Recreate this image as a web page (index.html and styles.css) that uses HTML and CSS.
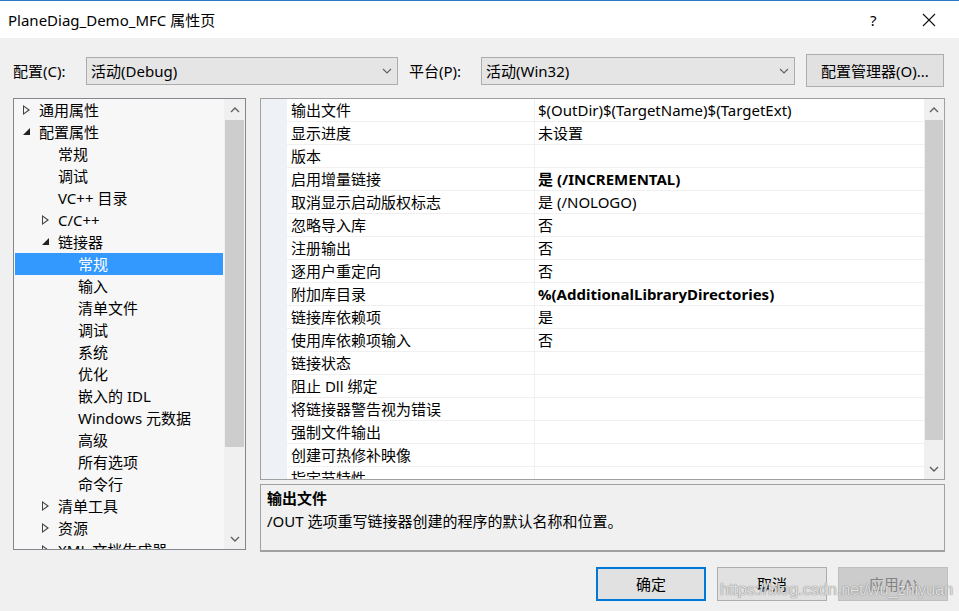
FILE: index.html
```html
<!DOCTYPE html>
<html lang="zh-CN">
<head>
  <meta charset="UTF-8">
  <title>PlaneDiag_Demo_MFC 属性页</title>
  <link rel="stylesheet" href="styles.css">
</head>
<body>
<div class="window">
  <div class="titlebar">
    <span class="title">PlaneDiag_Demo_MFC 属性页</span>
    <span class="help">?</span>
    <span class="close">
      <svg width="14" height="14" viewBox="0 0 14 14"><path d="M1 1L13 13M13 1L1 13" stroke="#111" stroke-width="1.1" fill="none"/></svg>
    </span>
  </div>

  <div class="content">
    <div class="config-row">
      <span class="label lbl-cfg">配置(C):</span>
      <div class="select sel-cfg">
        <span>活动(Debug)</span>
        <svg class="chev" width="10" height="6" viewBox="0 0 10 6"><path d="M1 1L5 5L9 1" stroke="#606060" stroke-width="1.1" fill="none"/></svg>
      </div>
      <span class="label lbl-plat">平台(P):</span>
      <div class="select sel-plat">
        <span>活动(Win32)</span>
        <svg class="chev" width="10" height="6" viewBox="0 0 10 6"><path d="M1 1L5 5L9 1" stroke="#606060" stroke-width="1.1" fill="none"/></svg>
      </div>
      <div class="btn btn-mgr">配置管理器(O)...</div>
    </div>

    <div class="main">
      <div class="tree">
        <div class="tree-list">
          <div class="node lv0"><span class="tw closed"></span>通用属性</div>
          <div class="node lv0"><span class="tw open"></span>配置属性</div>
          <div class="node lv1">常规</div>
          <div class="node lv1">调试</div>
          <div class="node lv1">VC++ 目录</div>
          <div class="node lv1"><span class="tw closed"></span>C/C++</div>
          <div class="node lv1"><span class="tw open"></span>链接器</div>
          <div class="node lv2 selected">常规</div>
          <div class="node lv2">输入</div>
          <div class="node lv2">清单文件</div>
          <div class="node lv2">调试</div>
          <div class="node lv2">系统</div>
          <div class="node lv2">优化</div>
          <div class="node lv2">嵌入的 IDL</div>
          <div class="node lv2">Windows 元数据</div>
          <div class="node lv2">高级</div>
          <div class="node lv2">所有选项</div>
          <div class="node lv2">命令行</div>
          <div class="node lv1"><span class="tw closed"></span>清单工具</div>
          <div class="node lv1"><span class="tw closed"></span>资源</div>
          <div class="node lv1"><span class="tw closed"></span>XML 文档生成器</div>
        </div>
        <div class="vscroll tree-scroll">
          <div class="arrow">
            <svg width="10" height="6" viewBox="0 0 10 6"><path d="M1 5L5 1L9 5" stroke="#606060" stroke-width="1.4" fill="none"/></svg>
          </div>
          <div class="thumb"></div>
          <div class="track"></div>
          <div class="arrow">
            <svg width="10" height="6" viewBox="0 0 10 6"><path d="M1 1L5 5L9 1" stroke="#606060" stroke-width="1.4" fill="none"/></svg>
          </div>
        </div>
      </div>

      <div class="right">
        <div class="props">
          <div class="prop-table">
            <div class="row"><span class="gutter"></span><span class="name">输出文件</span><span class="val">$(OutDir)$(TargetName)$(TargetExt)</span></div>
            <div class="row"><span class="gutter"></span><span class="name">显示进度</span><span class="val">未设置</span></div>
            <div class="row"><span class="gutter"></span><span class="name">版本</span><span class="val"></span></div>
            <div class="row"><span class="gutter"></span><span class="name">启用增量链接</span><span class="val bold">是 (/INCREMENTAL)</span></div>
            <div class="row"><span class="gutter"></span><span class="name">取消显示启动版权标志</span><span class="val">是 (/NOLOGO)</span></div>
            <div class="row"><span class="gutter"></span><span class="name">忽略导入库</span><span class="val">否</span></div>
            <div class="row"><span class="gutter"></span><span class="name">注册输出</span><span class="val">否</span></div>
            <div class="row"><span class="gutter"></span><span class="name">逐用户重定向</span><span class="val">否</span></div>
            <div class="row"><span class="gutter"></span><span class="name">附加库目录</span><span class="val bold">%(AdditionalLibraryDirectories)</span></div>
            <div class="row"><span class="gutter"></span><span class="name">链接库依赖项</span><span class="val">是</span></div>
            <div class="row"><span class="gutter"></span><span class="name">使用库依赖项输入</span><span class="val">否</span></div>
            <div class="row"><span class="gutter"></span><span class="name">链接状态</span><span class="val"></span></div>
            <div class="row"><span class="gutter"></span><span class="name">阻止 Dll 绑定</span><span class="val"></span></div>
            <div class="row"><span class="gutter"></span><span class="name">将链接器警告视为错误</span><span class="val"></span></div>
            <div class="row"><span class="gutter"></span><span class="name">强制文件输出</span><span class="val"></span></div>
            <div class="row"><span class="gutter"></span><span class="name">创建可热修补映像</span><span class="val"></span></div>
            <div class="row"><span class="gutter"></span><span class="name">指定节特性</span><span class="val"></span></div>
          </div>
          <div class="vscroll prop-scroll">
            <div class="arrow">
              <svg width="10" height="6" viewBox="0 0 10 6"><path d="M1 5L5 1L9 5" stroke="#606060" stroke-width="1.4" fill="none"/></svg>
            </div>
            <div class="thumb"></div>
            <div class="track"></div>
            <div class="arrow">
              <svg width="10" height="6" viewBox="0 0 10 6"><path d="M1 1L5 5L9 1" stroke="#606060" stroke-width="1.4" fill="none"/></svg>
            </div>
          </div>
        </div>
        <div class="desc">
          <div class="desc-title">输出文件</div>
          <div class="desc-text">/OUT 选项重写链接器创建的程序的默认名称和位置。</div>
        </div>
      </div>
    </div>

    <div class="buttons">
      <div class="btn btn-ok">确定</div>
      <div class="btn">取消</div>
      <div class="btn disabled">应用(A)</div>
    </div>
  </div>

  <div class="watermark">https://blog.csdn.net/wu_zhiyuan</div>
</div>
</body>
</html>
```

FILE: styles.css
```css
* {
  box-sizing: border-box;
}

body {
  margin: 0;
  font-family: "Noto Sans", "Noto Sans CJK SC", sans-serif;
  font-size: 15px;
  color: #000;
  background: #f0f0f0;
}

.window {
  position: relative;
  width: 959px;
  height: 611px;
  overflow: hidden;
  background: #f0f0f0;
}

.titlebar {
  height: 38px;
  display: flex;
  align-items: center;
  background: #fff;
  border-top: 1px solid #2b79c4;
  padding-left: 8px;
}

.title {
  flex: 1;
  line-height: 20px;
}

.help {
  width: 52px;
  text-align: left;
  line-height: 20px;
}

.close {
  width: 37px;
  display: flex;
  align-items: center;
}

.content {
  padding-left: 13px;
}

.config-row {
  margin-top: 16px;
  height: 33px;
  display: flex;
  align-items: center;
}

.label {
  line-height: 20px;
}

.lbl-cfg {
  width: 73px;
}

.lbl-plat {
  width: 72px;
  margin-left: 11px;
}

.select {
  height: 28px;
  display: flex;
  align-items: center;
  justify-content: space-between;
  padding: 0 5px 0 4px;
  background: #e5e5e5;
  border: 1px solid #acacac;
  line-height: 20px;
}

.sel-cfg {
  width: 312px;
}

.sel-plat {
  width: 314px;
}

.btn {
  height: 34px;
  width: 110px;
  display: flex;
  align-items: center;
  justify-content: center;
  background: #e1e1e1;
  border: 1px solid #adadad;
  line-height: 20px;
}

.btn-mgr {
  width: 138px;
  height: 33px;
  margin-left: 11px;
}

.main {
  margin-top: 11px;
  display: flex;
  gap: 14px;
  align-items: flex-start;
}

/* left tree */
.tree {
  width: 233px;
  height: 452px;
  display: flex;
  background: #f7f7f7;
  border: 1px solid #828790;
  overflow: hidden;
}

.tree-list {
  flex: 1;
  padding: 0 1px;
  overflow: hidden;
}

.node {
  height: 22px;
  line-height: 22px;
  white-space: nowrap;
}

.node.lv0 {
  padding-left: 24px;
}

.node.lv1 {
  padding-left: 43px;
}

.node.lv2 {
  padding-left: 63px;
}

.node.selected {
  background: #3399ff;
  color: #fff;
}

.tw {
  display: inline-block;
  width: 16px;
  margin-left: -16px;
  height: 22px;
  vertical-align: top;
  position: relative;
}

.tw.closed::before {
  content: "";
  position: absolute;
  left: 0;
  top: 6px;
  border-left: 7px solid #444;
  border-top: 5px solid transparent;
  border-bottom: 5px solid transparent;
}

.tw.closed::after {
  content: "";
  position: absolute;
  left: 1px;
  top: 8px;
  border-left: 4px solid #f7f7f7;
  border-top: 3px solid transparent;
  border-bottom: 3px solid transparent;
}

.tw.open::before {
  content: "";
  position: absolute;
  left: 0;
  top: 7px;
  border-right: 7px solid #222;
  border-top: 7px solid transparent;
}

.vscroll {
  width: 21px;
  display: flex;
  flex-direction: column;
  background: #f0f0f0;
}

.arrow {
  height: 21px;
  display: flex;
  align-items: center;
  justify-content: center;
}

.thumb {
  margin: 0 1px;
  background: #cdcdcd;
}

.track {
  flex: 1;
}

.tree-scroll .thumb {
  height: 327px;
}

/* property grid */
.right {
  width: 685px;
  display: flex;
  flex-direction: column;
  gap: 4px;
}

.props {
  height: 382px;
  display: flex;
  background: #fff;
  border: 1px solid #a0a0a0;
  overflow: hidden;
}

.prop-table {
  flex: 1;
  overflow: hidden;
}

.row {
  display: flex;
  height: 23px;
  line-height: 22px;
  white-space: nowrap;
}

.gutter {
  width: 26px;
  background: #eef1f6;
}

.name {
  width: 248px;
  padding-left: 4px;
  border-bottom: 1px solid #f0f0f0;
  border-right: 1px solid #f0f0f0;
}

.val {
  flex: 1;
  padding-left: 3px;
  border-bottom: 1px solid #f0f0f0;
}

.bold {
  font-weight: bold;
}

.prop-scroll {
  width: 20px;
}

.prop-scroll .thumb {
  height: 320px;
}

.desc {
  height: 68px;
  padding: 2px 6px;
  background: #f0f0f0;
  border: 1px solid #a0a0a0;
  border-bottom-width: 2px;
}

.desc-title {
  font-weight: bold;
  line-height: 22px;
}

.desc-text {
  line-height: 24px;
}

/* bottom buttons */
.buttons {
  margin-top: 15px;
  display: flex;
  gap: 11px;
  padding-left: 583px;
}

.btn-ok {
  border: 2px solid #0078d7;
}

.btn.disabled {
  background: #cccccc;
  border-color: #bfbfbf;
  color: #838383;
}

.watermark {
  position: absolute;
  left: 720px;
  top: 580px;
  font-family: "Liberation Sans", sans-serif;
  font-size: 16.5px;
  color: rgba(255, 255, 255, 0.75);
  text-shadow: 0 0 1px #777, 0 0 1px #999;
  letter-spacing: -0.2px;
}
```
